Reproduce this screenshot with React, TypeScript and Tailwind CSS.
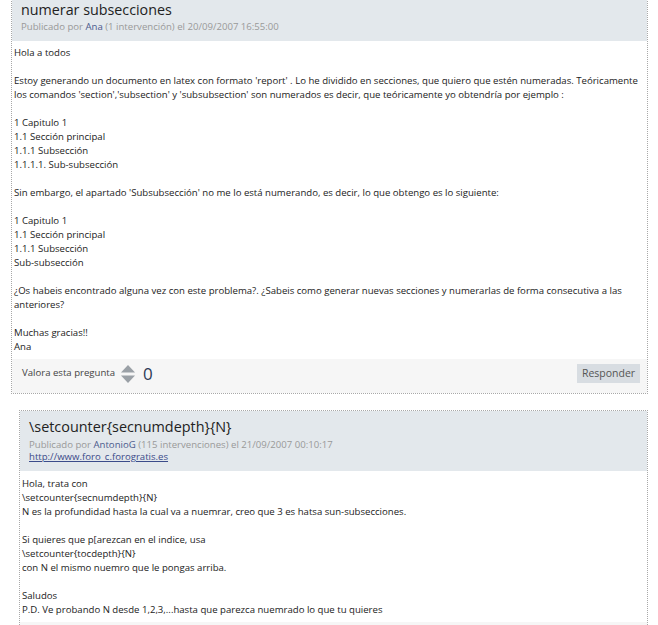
import React from 'react';

const FONT = { fontFamily: '"Open Sans", "Liberation Sans", sans-serif' };

const firstBody = [
  'Hola a todos',
  '',
  "Estoy generando un documento en latex con formato 'report' . Lo he dividido en secciones, que quiero que estén numeradas. Teóricamente los comandos 'section','subsection' y 'subsubsection' son numerados es decir, que teóricamente yo obtendría por ejemplo :",
  '',
  '1 Capitulo 1',
  '1.1 Sección principal',
  '1.1.1 Subsección',
  '1.1.1.1. Sub-subsección',
  '',
  "Sin embargo, el apartado 'Subsubsección' no me lo está numerando, es decir, lo que obtengo es lo siguiente:",
  '',
  '1 Capitulo 1',
  '1.1 Sección principal',
  '1.1.1 Subsección',
  'Sub-subsección',
  '',
  '¿Os habeis encontrado alguna vez con este problema?. ¿Sabeis como generar nuevas secciones y numerarlas de forma consecutiva a las anteriores?',
  '',
  'Muchas gracias!!',
  'Ana',
];

const replyBody = [
  'Hola, trata con',
  '\\setcounter{secnumdepth}{N}',
  'N es la profundidad hasta la cual va a nuemrar, creo que 3 es hatsa sun-subsecciones.',
  '',
  'Si quieres que p[arezcan en el indice, usa',
  '\\setcounter{tocdepth}{N}',
  'con N el mismo nuemro que le pongas arriba.',
  '',
  'Saludos',
  'P.D. Ve probando N desde 1,2,3,...hasta que parezca nuemrado lo que tu quieres',
];

const Body = ({ lines, top }: { lines: string[]; top: string }) => (
  <div className={`px-[2px] pb-[5px] text-[9.6px] leading-[14px] text-[#222] ${top}`}>
    {lines.map((l, i) => (
      <div key={i} className="min-h-[14px]">{l}</div>
    ))}
  </div>
);

const VoteArrows = () => (
  <svg width="14" height="18" viewBox="0 0 14 18" className="mx-[6px]">
    <polygon points="7,0 14,7.5 0,7.5" fill="#9aa0a6" />
    <polygon points="7,18 14,10.5 0,10.5" fill="#9aa0a6" />
  </svg>
);

export default function App() {
  return (
    <div className="bg-white h-[625px] overflow-hidden pl-[11px] pr-[10px]" style={FONT}>
      {/* Question */}
      <div className="-mt-[9px] border border-dotted border-[#a8a8a8]">
        <div className="bg-[#e3e8ec] pl-[9px] pt-[8px] pb-[8px]">
          <h1 className="text-[14.3px] leading-[20px] text-[#222]">numerar subsecciones</h1>
          <div className="text-[9.6px] leading-[12px] text-[#999] mt-[1px]">
            Publicado por <span className="text-[#4a5a8c]">Ana</span> (1 intervención) el 20/09/2007 16:55:00
          </div>
        </div>
        <Body lines={firstBody} top="pt-[5px]" />
        <div className="bg-[#f6f6f6] flex items-center justify-between pl-[10px] pr-[7px] pb-[5px] h-[34px]">
          <div className="flex items-center text-[9.6px] text-[#444]">
            <span>Valora esta pregunta</span>
            <VoteArrows />
            <span className="text-[17px] leading-[20px] text-[#2d3a55] ml-[2px]">0</span>
          </div>
          <button className="bg-[#d8dde2] text-[#555] text-[10.5px] h-[19px] w-[63px]">Responder</button>
        </div>
      </div>

      {/* Reply */}
      <div className="ml-[8px] mt-[16px] border border-dotted border-[#a8a8a8]">
        <div className="bg-[#e3e8ec] pl-[9px] pt-[6px] pb-[9px]">
          <h2 className="text-[14.4px] leading-[20px] text-[#222]">\setcounter&#123;secnumdepth&#125;&#123;N&#125;</h2>
          <div className="text-[9.6px] leading-[12px] text-[#999] mt-[2px]">
            Publicado por <span className="text-[#4a5a8c]">AntonioG</span> (115 intervenciones) el 21/09/2007 00:10:17
          </div>
          <a className="block text-[9.6px] leading-[11px] text-[#3b4b8a] underline">http://www.foro_c.forogratis.es</a>
        </div>
        <Body lines={replyBody} top="pt-[6px]" />
        <div className="bg-[#f6f6f6] h-[34px]" />
      </div>
    </div>
  );
}
